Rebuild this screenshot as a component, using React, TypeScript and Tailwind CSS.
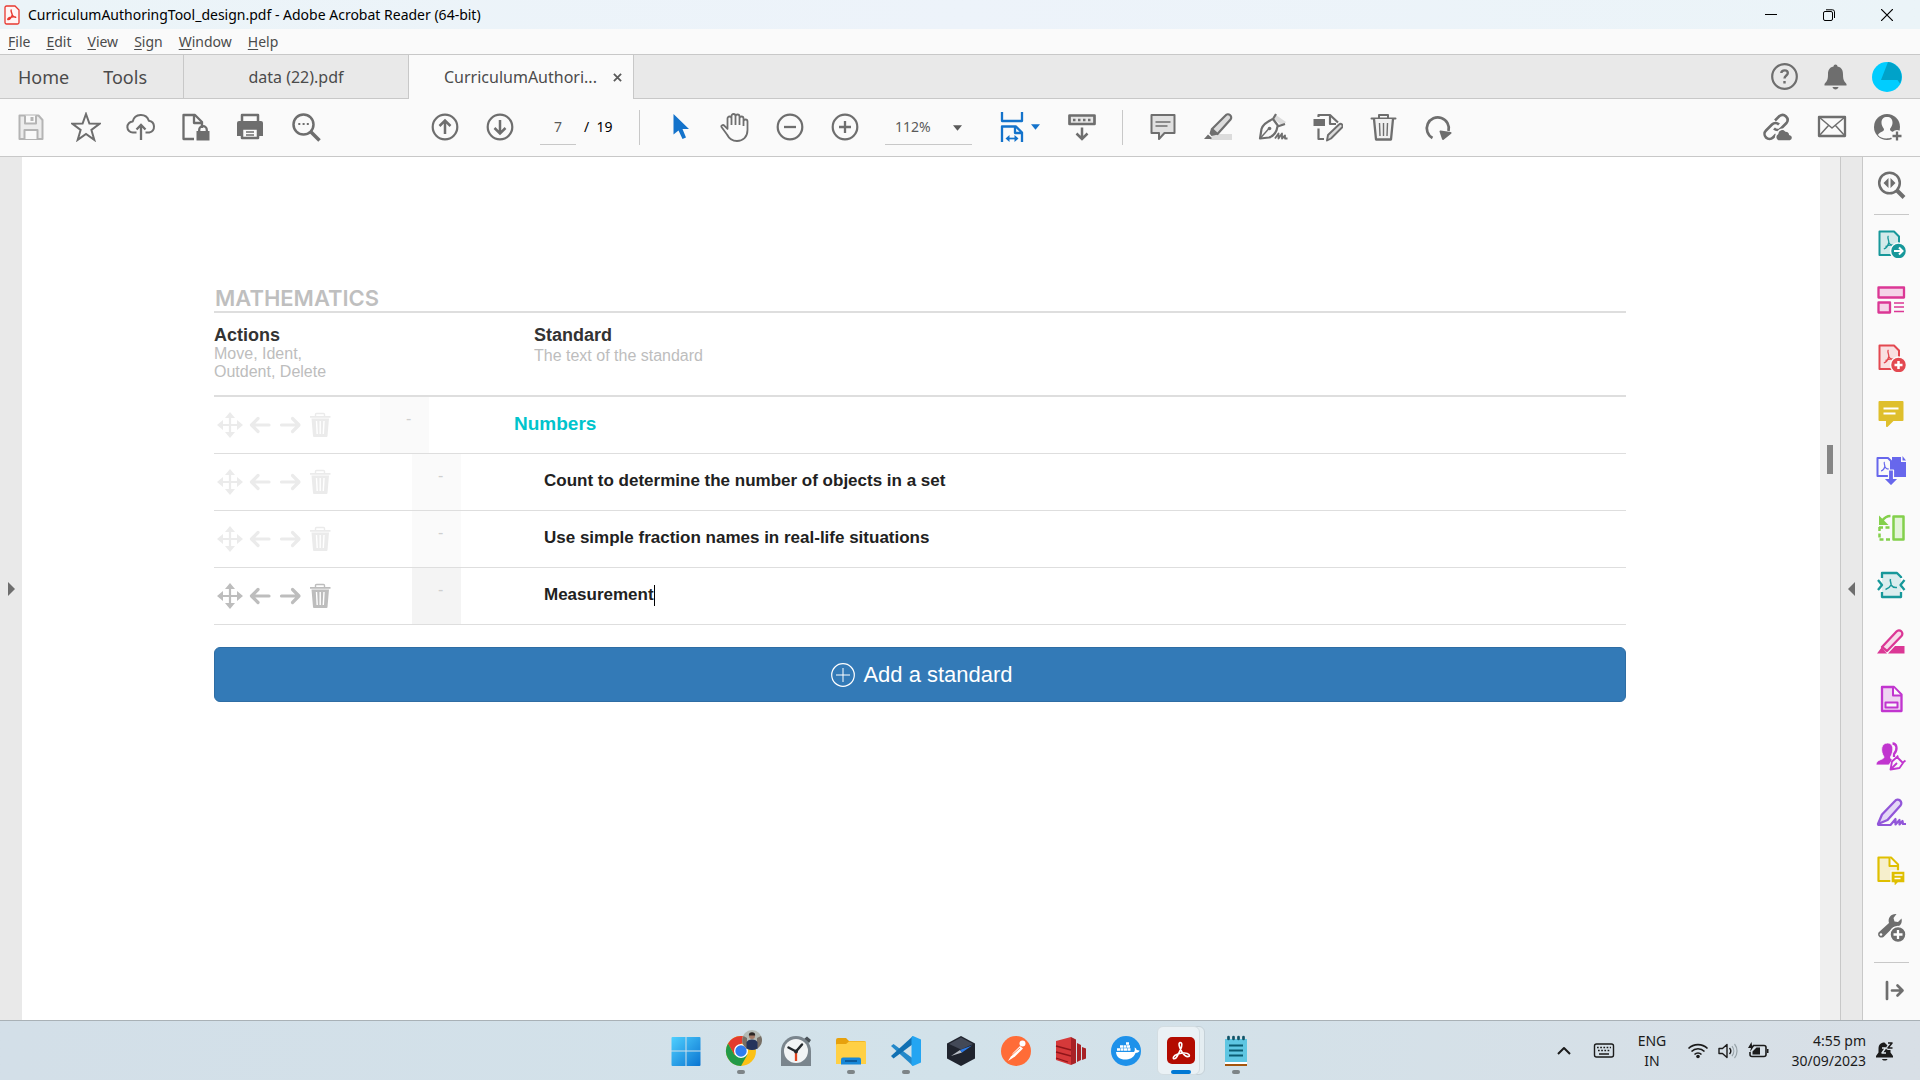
import React from 'react';

type IconProps = { children: React.ReactNode };

// Every glyph is drawn on a 30x30 board
const Icon: React.FC<IconProps> = ({ children }) => (
  <svg
    viewBox="0 0 30 30"
    className="h-[30px] w-[30px] shrink-0"
    fill="none"
    stroke="currentColor"
    strokeWidth="2"
    strokeLinejoin="round"
    aria-hidden="true"
  >
    {children}
  </svg>
);

type Tool = { label: string; art: React.ReactNode; className?: string };

const fileTools: Tool[] = [
  {
    label: 'Save',
    className: 'text-[#b4b4b4]',
    art: (
      <>
        <path d="M3.500 3.500h19l4 4.500v19h-23z" fill="#ececec" />
        <path d="M9 3.500v8h11v-8M8.500 27v-9h13v9" fill="#fafafa" />
        <path d="M16 5v4" strokeWidth="3" />
      </>
    ),
  },
  {
    label: 'Star',
    art: <path d="M15 2l3.400 9.600 10.100.2-8.100 6.200 2.900 9.900L15 22l-8.300 5.900 2.900-9.900-8.100-6.200 10.100-.2z" strokeLinejoin="miter" />,
  },
  {
    label: 'Upload',
    art: (
      <>
        <path d="M10.500 20.500H7a5.500 5.500 0 0 1-.3-11 8.400 8.400 0 0 1 16.100-.8 6 6 0 0 1 .5 11.800h-3.800" />
        <path d="M15 28V13M10.500 17.500L15 13l4.500 4.500" strokeLinejoin="miter" strokeWidth="2.300" />
      </>
    ),
  },
  {
    label: 'Protect',
    art: (
      <>
        <path d="M13 27H2.500V3H14l7 7v6" strokeWidth="2.300" />
        <path d="M13 3v8h8" strokeWidth="2.300" />
        <path d="M15.500 19h13v9.500h-13z" fill="currentColor" stroke="none" />
        <path d="M18.200 19v-1a3.800 3.800 0 0 1 7.600 0v1" strokeWidth="2.300" />
      </>
    ),
  },
  {
    label: 'Print',
    art: (
      <>
        <path d="M6 9V3h16v6" strokeWidth="2.500" />
        <path d="M1 11a2 2 0 0 1 2-2h22a2 2 0 0 1 2 2v13H1z" fill="currentColor" stroke="none" />
        <path d="M6 16.500h16V26H6z" fill="#fafafa" strokeWidth="2.500" />
        <path d="M10 20h8M10 23h8" strokeWidth="1.300" />
      </>
    ),
  },
  {
    label: 'Find',
    art: (
      <>
        <circle cx="12.500" cy="12.500" r="10" strokeWidth="2.500" />
        <path d="M20 20l8.500 8.500" strokeWidth="3.500" />
        <path d="M7.300 12h2M11.600 12h2M15.800 12h2" />
      </>
    ),
  },
];

const pageTools: Tool[] = [
  {
    label: 'Previous page',
    art: (
      <>
        <circle cx="15" cy="15" r="12.300" strokeWidth="2.200" />
        <path d="M15 22V8.500M9.500 14L15 8.500l5.500 5.500" strokeWidth="2.500" strokeLinejoin="miter" />
      </>
    ),
  },
  {
    label: 'Next page',
    art: (
      <>
        <circle cx="15" cy="15" r="12.300" strokeWidth="2.200" />
        <path d="M15 8v13.500M9.500 16l5.500 5.500 5.500-5.500" strokeWidth="2.500" strokeLinejoin="miter" />
      </>
    ),
  },
];

const viewTools: Tool[] = [
  {
    label: 'Select',
    className: 'text-[#1473cb]',
    art: <path d="M8.500 2v20.500l5-4 4 8.500 3.500-1.500-3.500-8.500H24z" fill="currentColor" stroke="none" />,
  },
  {
    label: 'Pan',
    art: (
      <path
        d="M7.500 17V6.500a2 2 0 0 1 4 0V13M11.500 6V4a2 2 0 0 1 4 0v9M15.500 4.500a2 2 0 0 1 4 0V13M19.500 6.500a2 2 0 0 1 4 0V14M23.500 9.500a2 2 0 0 1 4 0V18c0 7-4.500 11-10.500 11-5 0-8-2.500-10-6.500L1.500 15c-.7-1.600 1.500-2.800 3-1.200L8 17.500"
        strokeWidth="1.800"
      />
    ),
  },
  {
    label: 'Zoom out',
    art: (
      <>
        <circle cx="15" cy="15" r="12.300" strokeWidth="2.200" />
        <path d="M9 15h12" strokeWidth="2.300" />
      </>
    ),
  },
  {
    label: 'Zoom in',
    art: (
      <>
        <circle cx="15" cy="15" r="12.300" strokeWidth="2.200" />
        <path d="M9 15h12M15 9v12" strokeWidth="2.300" />
      </>
    ),
  },
];

const markupTools: Tool[] = [
  {
    label: 'Comment',
    art: (
      <>
        <path d="M3.500 3h23v18h-10L11 27v-6H3.500z" fill="#e0e0e0" />
        <path d="M7.500 10h15M7.500 14h12" strokeWidth="1.300" />
      </>
    ),
  },
  {
    label: 'Highlight',
    art: (
      <>
        <path d="M10 22h19v6H7z" fill="#dcdcdc" stroke="none" />
        <path d="M9 17L22.500 3.500a2.500 2.500 0 0 1 5 4L14.500 22z" fill="#dcdcdc" strokeWidth="2.200" />
        <path d="M8 16.500l7 6-6.500 1.500-2-2.500zM1 27l4-4.500 3.500 3V27z" fill="currentColor" stroke="none" />
      </>
    ),
  },
  {
    label: 'Sign',
    art: (
      <>
        <path d="M18 3l10 7-3 4-9-7z" fill="#dcdcdc" stroke="none" />
        <path d="M18 2l-3 5c-6 2.500-10 5-11.500 10L2 26.500l9-1c5-1.500 7.500-5 8.500-11L27 12M15 7l5.500 7.500" strokeWidth="2.200" />
        <path d="M2.500 26l8-9" strokeWidth="1.400" />
        <circle cx="11.500" cy="16.500" r="1.800" fill="currentColor" stroke="none" />
        <path d="M17 26.500l3.500-5v5l3.500-5v5l3-3v3h2.500" strokeWidth="1.800" />
      </>
    ),
  },
  {
    label: 'Edit',
    art: (
      <>
        <path d="M5.500 5V3H17l8 7.500" strokeWidth="2.200" />
        <path d="M17 3v9h6M5.500 16.500V27H11" strokeWidth="2.200" />
        <path d="M.5 7h11.500v7H.5z" fill="currentColor" stroke="none" />
        <path d="M15 23l11-10.500a2 2 0 0 1 3 3L18 26.500l-4 2z" fill="#dcdcdc" strokeWidth="1.900" />
      </>
    ),
  },
  {
    label: 'Delete',
    art: (
      <>
        <path d="M3.500 6.500h24M11 6V3h9v3" strokeLinecap="round" />
        <path d="M6 7l2 20.500h15l2-20.500" fill="#f1f1f1" strokeWidth="2.300" />
        <path d="M11.500 11l.5 13M15.500 11v13M19.500 11l-.5 13" strokeWidth="1.400" />
      </>
    ),
  },
  {
    label: 'Rotate',
    art: (
      <>
        <path d="M9.500 26A11 11 0 1 1 25.500 19" strokeWidth="2.700" />
        <path d="M17.500 19.500l10 1.500-7.500 6z" fill="currentColor" />
      </>
    ),
  },
];

const shareTools: Tool[] = [
  {
    label: 'Share link',
    art: (
      <>
        <path d="M13 8.500L17.500 4a5 5 0 0 1 7 7L19 16.500a5 5 0 0 1-7 0" strokeWidth="2.600" />
        <path d="M17 12.500a5 5 0 0 0-7 0l-6 6a4.900 4.900 0 0 0 7 7l3-3" strokeWidth="2.600" />
        <path d="M16 29a4.300 4.300 0 0 1-.3-7.500 4.500 4.500 0 0 1 8-2.500 4 4 0 0 1 4 3.500 3.300 3.300 0 0 1 .3 6.500z" fill="currentColor" stroke="#fafafa" strokeWidth="1.500" />
      </>
    ),
  },
  {
    label: 'Email',
    art: (
      <>
        <path d="M2 5h26v19H2z" strokeWidth="2.300" />
        <path d="M2 5l13 11L28 5M2 24l9.500-10.500M28 24l-9.500-10.500" strokeWidth="1.500" />
      </>
    ),
  },
  {
    label: 'Add people',
    art: (
      <>
        <circle cx="15" cy="15" r="13" fill="currentColor" stroke="none" />
        <path
          d="M6 23c1-3 6-3 6-5.500 0-1.500-2.500-3-2.500-7 0-3.500 2-5.500 5.500-5.500s5.500 2 5.500 5.500c0 4-2.500 5.500-2.500 7 0 2.500 6 2.500 6 5.500-3 4-15 5-18 0z"
          fill="#fafafa"
          stroke="none"
        />
        <circle cx="25" cy="24" r="6" fill="#fafafa" stroke="none" />
        <path d="M20.500 24h9M25 19.500v9" strokeWidth="2.300" />
      </>
    ),
  },
];

const Trefoil = () => (
  <path d="M12.500 8c-1.800 1 .5 4 .3 6.500-.6 2.500-2.300 5.500-5 6.500M12.800 14.500c1.500 2.500 3.500 4 6.700 3.500M9.500 18.500c2.500-1.500 5.500-2 8.500-1.500" strokeWidth="1.300" />
);

const sideTools: Tool[] = [
  {
    label: 'Export PDF',
    className: 'text-[#17989a]',
    art: (
      <>
        <path d="M3.500 3.500H18l5 5V27H3.500z" fill="#d3eaea" />
        <Trefoil />
        <circle cx="22.500" cy="23" r="8" fill="currentColor" stroke="#fafafa" strokeWidth="1.500" />
        <path d="M18 23h8M23 19.500l3.500 3.500-3.500 3.500" stroke="#fff" strokeLinejoin="miter" />
      </>
    ),
  },
  {
    label: 'Organize pages',
    className: 'text-[#db3795]',
    art: (
      <>
        <path d="M2.500 2.500H28v10H2.500zM2.500 17.500H14v10H2.500z" fill="#f5d3e8" strokeWidth="2.300" />
        <path d="M18 18h10M18 22h10M18 26.500h10" strokeWidth="1.300" />
      </>
    ),
  },
  {
    label: 'Create PDF',
    className: 'text-[#e34850]',
    art: (
      <>
        <path d="M3.500 3.500H18l5 5V27H3.500z" fill="#f9dfe1" />
        <Trefoil />
        <circle cx="22.500" cy="23" r="8" fill="currentColor" stroke="#fafafa" strokeWidth="1.500" />
        <path d="M18.500 23h8M22.500 19v8" stroke="#fff" strokeWidth="2.500" />
      </>
    ),
  },
  {
    label: 'Comment',
    className: 'text-[#dfbf2c]',
    art: (
      <>
        <path d="M3.500 3h23v18h-9.500L11 27v-6H3.500z" fill="currentColor" />
        <path d="M7.500 9.500h15M7.500 14.500h12" stroke="#fff" />
      </>
    ),
  },
  {
    label: 'Combine files',
    className: 'text-[#6767ec]',
    art: (
      <>
        <path d="M16 1h9v5h5v15H16z" fill="currentColor" stroke="none" />
        <path d="M26.500 0L30 4.500h-3.500z" fill="currentColor" stroke="none" />
        <path d="M1.500 2H12l3 3v15H1.500z" fill="#fafafa" />
        <path d="M8.500 6c-1 1 .5 3 .3 4.500-.5 2-1.500 4-3.800 4.500M8.800 10.500c1 2 2 3 4.200 2.500" strokeWidth="1.200" />
        <path d="M12.500 14h5v8.500h5L15 30l-7.500-7.500h5z" fill="currentColor" stroke="#fafafa" strokeWidth="1.200" />
      </>
    ),
  },
  {
    label: 'Compare files',
    className: 'text-[#83d04b]',
    art: (
      <>
        <path d="M17.500 3.500h10v23h-10z" fill="#e3f4d8" strokeWidth="2.500" />
        <path d="M3 14.500h11M3.500 26.500h11M3.500 14v12.500" strokeDasharray="4 2.500" strokeWidth="2.500" />
        <path d="M14.500 3c-4 0-6.500 2-8.500 5" strokeWidth="2.700" />
        <path d="M3 2.500v9.500h9.500z" fill="currentColor" stroke="none" />
      </>
    ),
  },
  {
    label: 'Compress PDF',
    className: 'text-[#17989a]',
    art: (
      <>
        <path d="M6 8V3h15l4 5v19H6z" fill="#dbedee" stroke="none" />
        <path d="M6 8V3h15l4 4v1M6 22v5h19v-5M2 10l4 5-4 5M28.500 10l-4 5 4 5" strokeWidth="2.300" />
        <path d="M14.500 9c-1 2 1 4 .5 6-1 2-2.500 3.500-5.500 4.500M15 15c1.500 2 3 3 6 2.500" strokeWidth="1.500" />
      </>
    ),
  },
  {
    label: 'Redact',
    className: 'text-[#db3795]',
    art: (
      <>
        <path d="M12 26.500L19 19h9.500v7.500zM1 26.500l4.500-6 5.500 6z" fill="currentColor" stroke="none" />
        <path d="M6 20L20.500 4.500a2.500 2.500 0 0 1 5 4.500L11 24z" fill="#f7dcea" strokeWidth="2.300" />
      </>
    ),
  },
  {
    label: 'Prepare form',
    className: 'text-[#c135cf]',
    art: (
      <>
        <path d="M6 3h12l7.500 7.500V27H6z" fill="#efd3f2" strokeWidth="2.300" />
        <path d="M17 3v8.500h8" fill="#fafafa" />
        <path d="M9.500 18.500h12v5h-12z" fill="#fafafa" />
      </>
    ),
  },
  {
    label: 'Request signatures',
    className: 'text-[#c135cf]',
    art: (
      <>
        <path d="M16.500 2.500c4.500 0 5.500 6 1.500 10.500v3" strokeWidth="2.300" />
        <path d="M0 24c0-6 8-5 8-8C4 10 5 2 11.500 2S18 10 14.500 16c0 2 1 2 2 2.500L13 24z" fill="currentColor" stroke="#fafafa" strokeWidth=".8" />
        <path d="M14.500 28.500l1.500-8 5-4.500 6 6-3.500 5zM22 14.500l-1 2M29.500 19.500L27 21.500M15 28l6-6" fill="#fafafa" strokeWidth="1.800" />
      </>
    ),
  },
  {
    label: 'Fill and sign',
    className: 'text-[#9256d9]',
    art: (
      <>
        <path d="M2 26l4-9.500L19 3a3 3 0 0 1 5.500 4.500L11.500 22 2 26z" fill="#e4d8f6" strokeWidth="2.300" />
        <path d="M1.500 27h13l5-6v5.500l4-4.500v4.500l3-3.500.5 3h3" strokeWidth="2.200" />
      </>
    ),
  },
  {
    label: 'Send for comments',
    className: 'text-[#dfbf00]',
    art: (
      <>
        <path d="M2.500 2.500H15l7 7V26H2.500z" fill="#f6efcc" strokeWidth="2.200" />
        <path d="M13.500 2.500V11H22" fill="#fafafa" />
        <path d="M15 16h14v12h-7l-4 4v-4h-3z" fill="currentColor" stroke="#fafafa" strokeWidth="1.300" />
        <path d="M18.500 20h8M18.500 23.500h6" stroke="#fff" strokeWidth="1.500" />
      </>
    ),
  },
  {
    label: 'More tools',
    art: (
      <>
        <path
          d="M2.500 20.500L13 11c-1.500-5 2-9.500 7.500-9l-3 4 1 3.500 3.500.5 3.500-3.500c1.500 5.500-3 9.500-8 8.500L7.500 25c-3.500 2-6.500-1.500-5-4.500z"
          fill="currentColor"
          stroke="none"
        />
        <circle cx="5" cy="22.500" r="1.300" fill="#fafafa" stroke="none" />
        <circle cx="22" cy="22.500" r="8" fill="currentColor" stroke="#fafafa" strokeWidth="1.500" />
        <path d="M17.500 22.500h9M22 18v9" stroke="#fff" strokeWidth="2.300" />
      </>
    ),
  },
];

const ToolButton: React.FC<{ tool: Tool }> = ({ tool }) => (
  <button type="button" aria-label={tool.label} className={`block shrink-0 ${tool.className ?? 'text-[#6e6e6e]'}`}>
    <Icon>{tool.art}</Icon>
  </button>
);

const Caret = () => (
  <svg viewBox="0 0 10 6" className="h-[6px] w-[9px]" fill="currentColor" aria-hidden="true">
    <path d="M0 0h10L5 6z" />
  </svg>
);

const TitleBar = () => (
  <header className="flex h-[29px] items-center bg-gradient-to-r from-[#ebf4f8] via-[#edf3fa] to-[#ebf4f8] text-black">
    <svg viewBox="0 0 16 20" className="ml-1 h-5 w-4" fill="#fff5f5" stroke="#e8382f" aria-hidden="true">
      <path d="M1 2.500A1.500 1.500 0 0 1 2.500 1H11l4 4v12.500a1.500 1.500 0 0 1-1.500 1.500h-11A1.500 1.500 0 0 1 1 17.500z" strokeWidth="1.300" />
      <path d="M7.500 4.500c-1.500 1 .8 4 .8 5.500-.8 2-2.600 5-4.500 4.500-.8-1.500 4-3 7.500-2.500 1.500 1-2-.3-3-2" fill="none" strokeWidth="1.400" />
    </svg>
    <h1 className="ml-2 text-sm">CurriculumAuthoringTool_design.pdf - Adobe Acrobat Reader (64-bit)</h1>
    <div className="ml-auto flex pr-1">
      <button type="button" aria-label="Minimize" className="flex h-[29px] w-[58px] items-center justify-center">
        <svg viewBox="0 0 12 12" className="h-3 w-3" stroke="#000"><path d="M0 5.500h12" /></svg>
      </button>
      <button type="button" aria-label="Restore" className="flex h-[29px] w-[58px] items-center justify-center">
        <svg viewBox="0 0 12 12" className="h-3 w-3" stroke="#000" fill="none">
          <rect x=".5" y="2.500" width="9" height="9" rx="1.500" />
          <path d="M3 .8h6.500a2 2 0 0 1 2 2V9" />
        </svg>
      </button>
      <button type="button" aria-label="Close" className="flex h-[29px] w-[58px] items-center justify-center">
        <svg viewBox="0 0 12 12" className="h-3 w-3" stroke="#000" strokeWidth="1.200"><path d="M0 0l12 12M12 0L0 12" /></svg>
      </button>
    </div>
  </header>
);

const menuItems = ['File', 'Edit', 'View', 'Sign', 'Window', 'Help'];

const MenuBar = () => (
  <nav className="flex h-[25px] items-center gap-4 bg-[#fafafa] pl-2 text-sm text-[#4b4b4b]">
    {menuItems.map((item) => (
      <button key={item} type="button">
        <span className="underline underline-offset-2">{item[0]}</span>
        {item.slice(1)}
      </button>
    ))}
  </nav>
);

const TabBar = () => (
  <div className="flex h-[45px] border-t border-[#c8c8c8] bg-[#e9e9e9] text-[#4b4b4b]">
    <div className="flex w-[183px] items-center gap-[34px] border-b border-[#c8c8c8] pl-[18px] text-lg">
      <button type="button">Home</button>
      <button type="button">Tools</button>
    </div>
    <button type="button" className="w-[226px] border-x border-b border-[#c8c8c8] text-base">
      data (22).pdf
    </button>
    <div className="flex w-[225px] items-center border-r border-[#c8c8c8] bg-[#fafafa] pl-[35px] text-base">
      <button type="button" className="w-[154px] whitespace-nowrap text-left">CurriculumAuthori...</button>
      <button type="button" aria-label="Close tab" className="ml-[15px]">
        <svg viewBox="0 0 10 10" className="h-[9px] w-[9px]" stroke="#5a5a5a" strokeWidth="2"><path d="M1 1l8 8M9 1L1 9" /></svg>
      </button>
    </div>
    <div className="flex flex-1 items-center justify-end gap-[21px] border-b border-[#c8c8c8] pr-[18px] text-[#6e6e6e]">
      <button type="button" aria-label="Help">
        <Icon>
          <circle cx="14.500" cy="14.500" r="12.300" strokeWidth="2.200" />
          <path d="M11.300 11c.3-3.500 6.500-3.500 6.500 0 0 2.500-3.300 2.500-3.300 5.500M14.500 19v2.500" strokeWidth="2.400" />
        </Icon>
      </button>
      <button type="button" aria-label="Notifications">
        <Icon>
          <path
            d="M14.500 2.500a2 2 0 0 1 2 2c4.500 1 5.500 4 5.500 8 0 6 1.500 7 3.500 9.500v1.500h-22V22c2-2.500 3.500-3.500 3.500-9.500 0-4 1-7 5.500-8a2 2 0 0 1 2-2zM11.500 25h6c-.5 3.300-5.500 3.300-6 0z"
            fill="currentColor"
            stroke="none"
          />
        </Icon>
      </button>
      <button type="button" aria-label="Account">
        <Icon>
          <circle cx="15" cy="15" r="15" fill="#00cdff" stroke="none" />
          <path d="M16 0a15 15 0 0 1 12 21.500l-2.500-3.500H9z" fill="#00a2c9" stroke="none" />
        </Icon>
      </button>
    </div>
  </div>
);

const Toolbar = () => (
  <div className="flex h-[58px] items-center border-b border-[#c8c8c8] bg-[#fafafa] pb-px pl-4 pr-[18px]">
    <div className="flex gap-[25px]">
      {fileTools.map((tool) => <ToolButton key={tool.label} tool={tool} />)}
    </div>
    <div className="ml-[109px] flex items-center gap-[25px]">
      {pageTools.map((tool) => <ToolButton key={tool.label} tool={tool} />)}
      <div className="flex w-[74px] items-center text-sm text-black">
        <input
          aria-label="Page number"
          defaultValue="7"
          className="h-[35px] w-9 border-b border-[#c8c8c8] bg-transparent text-center text-[#5a5a5a] outline-none"
        />
        <span className="ml-2 whitespace-pre">/  19</span>
      </div>
      <div className="h-[35px] w-px bg-[#c8c8c8]" />
      {viewTools.map((tool) => <ToolButton key={tool.label} tool={tool} />)}
      <div className="relative w-[87px] text-[#5a5a5a]">
        <select
          aria-label="Zoom level"
          defaultValue="112%"
          className="h-[35px] w-full appearance-none border-b border-[#c8c8c8] bg-transparent pl-[10px] text-sm outline-none"
        >
          <option>112%</option>
        </select>
        <span className="pointer-events-none absolute right-[10px] top-[15px]"><Caret /></span>
      </div>
      <button type="button" aria-label="Fit width" className="flex w-[45px] items-center gap-1 text-[#1473cb]">
        <Icon>
          <path d="M5 0v9h20V0" strokeWidth="2.300" />
          <path d="M5 30V14.500h14l6 6V30M18 14.500v6.500h7" strokeWidth="2.300" />
          <path d="M10 26.500h10" strokeWidth="1.700" />
          <path d="M12.500 23v7L8.500 26.500zM17.500 23v7l4-3.500z" fill="currentColor" stroke="none" />
        </Icon>
        <Caret />
      </button>
      <button type="button" aria-label="Reading mode" className="text-[#6e6e6e]">
        <Icon>
          <path d="M2.500 3.500h25v8.500h-25z" fill="#e6e6e6" strokeWidth="2.700" />
          <path d="M6 8h2.500M11 8h2.500M16 8h2.500M21 8h2.500" strokeWidth="2.500" />
          <path d="M15 15.500V27M9.500 21.500L15 27l5.500-5.500" strokeWidth="2.500" strokeLinejoin="miter" />
        </Icon>
      </button>
      <div className="h-[35px] w-px bg-[#c8c8c8]" />
      {markupTools.map((tool) => <ToolButton key={tool.label} tool={tool} />)}
    </div>
    <div className="ml-auto flex gap-[25px]">
      {shareTools.map((tool) => <ToolButton key={tool.label} tool={tool} />)}
    </div>
  </div>
);

type Standard = { text: string; top?: boolean; editing?: boolean };

const standards: Standard[] = [
  { text: 'Numbers', top: true },
  { text: 'Count to determine the number of objects in a set' },
  { text: 'Use simple fraction names in real-life situations' },
  { text: 'Measurement', editing: true },
];

const RowActions: React.FC<{ editing?: boolean }> = ({ editing }) => (
  <div className={`flex items-center pl-px ${editing ? 'text-[#bdbdbd]' : 'text-[#ebebeb]'}`}>
    <button type="button" aria-label="Move">
      <Icon>
        <path d="M15 5v20M5 15h20" strokeWidth="2.200" />
        <path d="M15 2l5 6H10zM15 28l5-6H10zM2 15l6-5v10zM28 15l-6-5v10z" fill="currentColor" stroke="none" />
      </Icon>
    </button>
    <button type="button" aria-label="Outdent">
      <Icon><path d="M24 15H7M13 8.500L6.500 15l6.500 6.500" strokeWidth="3.200" strokeLinecap="round" /></Icon>
    </button>
    <button type="button" aria-label="Indent">
      <Icon><path d="M6.500 15h17M17.500 8.500L24 15l-6.500 6.500" strokeWidth="3.200" strokeLinecap="round" /></Icon>
    </button>
    <button type="button" aria-label="Delete">
      <Icon>
        <path d="M10.500 6.500V4.500q0-1 1-1h7q1 0 1 1v2" strokeWidth="1.400" />
        <path d="M5 6h20.500v1.700H5zM6.500 8.500h17.500L22.500 26q0 1-1 1H9q-1 0-1-1z" fill="currentColor" stroke="none" />
        <path d="M11.500 11l.7 13M15.200 11v13M19 11l-.7 13" stroke="#fff" strokeWidth="1.400" />
      </Icon>
    </button>
  </div>
);

const StandardsPage = () => (
  <main className="min-w-0 flex-1 bg-white pb-20 pl-[192px] pr-[194px] pt-[128px] font-['Liberation_Sans',Arial,sans-serif]">
    <h2 className="border-b-2 border-[#dedede] pl-px font-['Inter',sans-serif] text-[22px] font-semibold leading-[26px] text-[#bfbfbf]">
      MATHEMATICS
    </h2>
    <table className="w-full table-fixed border-collapse text-left">
      <colgroup>
        <col className="w-[166px]" />
        <col className="w-[134px]" />
        <col />
      </colgroup>
      <thead>
        <tr className="h-[83px] border-b-2 border-[#dedede] align-top">
          <th className="pt-3 font-normal">
            <div className="text-[18px] font-bold leading-[20px] text-[#333]">Actions</div>
            <div className="w-[120px] text-[16px] leading-[18px] text-[#bdbdbd]">Move, Ident, Outdent, Delete</div>
          </th>
          <th aria-label="Level" />
          <th className="pl-5 pt-3 font-normal">
            <div className="text-[18px] font-bold leading-[20px] text-[#333]">Standard</div>
            <div className="mt-[2px] text-[16px] leading-[18px] text-[#bdbdbd]">The text of the standard</div>
          </th>
        </tr>
      </thead>
      <tbody>
        {standards.map((row) => (
          <tr key={row.text} className="h-[57px] border-b border-[#dedede]">
            <td className="p-0"><RowActions editing={row.editing} /></td>
            <td className="p-0">
              <div
                className={`flex h-14 w-[49px] items-center pb-3 text-[16px] text-[#cfcfcf] ${row.top ? '' : 'ml-8'} ${
                  row.editing ? 'bg-[#f4f4f4]' : 'bg-[#fafafa]'
                }`}
              >
                <span className="ml-[26px]">-</span>
              </div>
            </td>
            <td className={`p-0 pb-[2px] font-bold ${row.top ? 'text-[19px] text-[#00c4cc]' : 'pl-[30px] text-[17px] text-[#212121]'}`}>
              <span className="flex items-center">
                {row.text}
                {row.editing && <span className="h-[21px] w-px bg-black" />}
              </span>
            </td>
          </tr>
        ))}
      </tbody>
    </table>
    <button
      type="button"
      className="mt-[22px] flex h-[55px] w-full items-center justify-center gap-2 rounded-md border border-[#2e6da4] bg-[#337ab7] pl-1 text-[22px] text-white"
    >
      <svg viewBox="0 0 24 24" className="h-6 w-6" fill="none" stroke="currentColor" aria-hidden="true">
        <circle cx="12" cy="12" r="11.300" strokeWidth="1.200" />
        <path d="M5 12h14M12 5v14" />
      </svg>
      Add a standard
    </button>
  </main>
);

const SidePanel = () => (
  <aside className="flex w-[58px] flex-col items-center border-l border-[#c8c8c8] bg-[#fafafa] pr-px pt-[13px] text-[#6e6e6e]">
    <button type="button" aria-label="Search tools">
      <Icon>
        <circle cx="13.500" cy="13" r="10.300" strokeWidth="2.500" />
        <path d="M21 20.500l7 7" strokeWidth="4" />
        <path d="M12.500 8v10l-5-5zM14.500 8v10l5-5z" fill="currentColor" stroke="none" />
      </Icon>
    </button>
    <div className="mb-[13px] mt-[14px] h-px w-[35px] bg-[#c8c8c8]" />
    <div className="flex flex-col gap-[27px]">
      {sideTools.map((tool) => <ToolButton key={tool.label} tool={tool} />)}
    </div>
    <div className="mb-[13px] mt-[20px] h-px w-[35px] bg-[#c8c8c8]" />
    <button type="button" aria-label="Collapse panel">
      <Icon>
        <path d="M11 6v17M16 14.500h9M21.500 9.500l5 5-5 5" strokeWidth="2.700" strokeLinecap="round" />
      </Icon>
    </button>
  </aside>
);

type TaskApp = { name: string; art: React.ReactNode; running?: boolean; active?: boolean };

const taskApps: TaskApp[] = [
  {
    name: 'Start',
    art: (
      <g stroke="none">
        <linearGradient id="win" x1="0" y1="0" x2="1" y2="1">
          <stop stopColor="#4fd0ff" />
          <stop offset="1" stopColor="#0a74d1" />
        </linearGradient>
        <path d="M.5 2q0-1 1-1h13v13.500H.5zM15.500 1h13q1 0 1 1v12.500h-14zM.5 15.500h14V30h-13q-1 0-1-1zM15.500 15.500h14V29q0 1-1 1h-13z" fill="url(#win)" />
      </g>
    ),
  },
  {
    name: 'Google Chrome',
    running: true,
    art: (
      <g stroke="none">
        <circle cx="15" cy="15" r="15" fill="#fbc116" />
        <path d="M2 7.500A15 15 0 0 1 28 7.500H15L8.500 19z" fill="#e33b2e" />
        <path d="M2 7.500A15 15 0 0 0 15 30l6.500-11.500L8.500 19z" fill="#229a48" />
        <circle cx="15" cy="15" r="7" fill="#fff" />
        <circle cx="15" cy="15" r="5.700" fill="#2f7df0" />
        <circle cx="26" cy="4" r="10" fill="#b4bbb5" />
        <path d="M17.500 0a10 10 0 0 0 .5 10l3 3V2zM35 0a10 10 0 0 1-1 10l-3 3V2z" fill="#776f66" />
        <path d="M20.500 12.500V6.500q1-3 5.500-3t5.500 3v6q-5.500 3-11 0z" fill="#24345c" />
        <circle cx="26" cy="0" r="3" fill="#a47a66" />
        <path d="M22.800-.5a3.200 3.200 0 0 1 6.400 0z" fill="#2b2523" />
      </g>
    ),
  },
  {
    name: 'Clock',
    art: (
      <g stroke="none">
        <path d="M23 3l3-2.500L30 4l-2 3z" fill="#4a5258" />
        <path d="M0 30V15a15 15 0 0 1 30 0v15z" fill="#7a858d" />
        <circle cx="15" cy="15" r="12" fill="#f2f4f5" />
        <path d="M15 15v10" stroke="#e0431d" strokeWidth="2.300" />
        <path d="M7.500 11.500L15 15.500l6-7" stroke="#23282c" strokeWidth="2.500" strokeLinecap="round" />
        <circle cx="15" cy="15.500" r="2" fill="#23282c" />
      </g>
    ),
  },
  {
    name: 'File Explorer',
    running: true,
    art: (
      <g stroke="none">
        <path d="M0 4q0-2 2-2h8l3 3h15q2 0 2 2v6H0z" fill="#e7a10c" />
        <path d="M0 9q0-1 1-1h9l3-2.500h16q1 0 1 1V28H0z" fill="#ffd045" />
        <path d="M5 28.500v-5q0-2 2-2h16q2 0 2 2v5z" fill="#1787d8" />
        <path d="M9 25h12" stroke="#0b5c9e" />
      </g>
    ),
  },
  {
    name: 'Visual Studio Code',
    running: true,
    art: (
      <g stroke="none">
        <path d="M0 10l2.500-2L22 22.500V30z" fill="#2489ca" />
        <path d="M0 20l2.500 2.500L22 8V0z" fill="#1070b3" />
        <path d="M22 0l8 3.500v23L22 30l-1.500-1V1z" fill="#24a5f2" />
      </g>
    ),
  },
  {
    name: 'Database Client',
    art: (
      <g stroke="none">
        <path d="M15 0l14 7.500v15L15 30 1 22.500v-15z" fill="#20242e" />
        <path d="M15 1.500l12 6.500-12 5.500L3 8z" fill="#434957" />
        <path d="M5 20l9-6 2 2.500z" fill="#b9bec6" />
        <path d="M26 9.500L14 14l2 2.500z" fill="#2c7be8" />
      </g>
    ),
  },
  {
    name: 'Postman',
    art: (
      <g stroke="none">
        <circle cx="15" cy="15" r="15" fill="#ff6c37" />
        <circle cx="21.500" cy="7.500" r="3" fill="#fff" />
        <path d="M19 10l3 2.500-8 8-7 4.500 5-8z" fill="#fff" />
        <path d="M10 20l9-8" stroke="#ff6c37" strokeWidth=".8" />
      </g>
    ),
  },
  {
    name: 'Redis Insight',
    art: (
      <g stroke="none">
        <path d="M0 5l15-4v28L0 24z" fill="#d6393a" />
        <path d="M15 1l5 2.500V27l-5 2zM21 7l4 2v15l-4 2zM26 11l4 1.500v10L26 24z" fill="#a82226" />
        <path d="M0 10l15 4M0 16l15 4M0 22l12 4" stroke="#8f1519" strokeWidth="1.300" />
      </g>
    ),
  },
  {
    name: 'Docker',
    art: (
      <g stroke="none">
        <circle cx="15" cy="15" r="15" fill="#1d91ea" />
        <path d="M5 16h18c1-1 1-3 .5-4.500 1.500.5 2 1.500 2.200 2.500 1 0 2 .2 3 .8-1 1.700-2.500 2.200-4.200 2.200-2 5-6 6.500-10.500 6.500-5 0-8.500-2-9-7.500z" fill="#fff" />
        <path d="M6 13.500h14M9 10.500h10M15 7.500h3.500" stroke="#fff" strokeWidth="2.500" strokeDasharray="3 .5" />
      </g>
    ),
  },
  {
    name: 'Adobe Acrobat',
    running: true,
    active: true,
    art: (
      <>
        <rect x="1" y="1" width="28" height="27" rx="5" fill="#b30b00" stroke="none" />
        <path
          d="M14 6.500c-2.500 1 .5 7 2 9.500 2 3 4.500 5 6.500 4.500s.5-3.500-4-3.500c-4 0-10 1.500-11 4s1.800 2.500 3.500-.5c2-3.500 5-9 4.800-12 0-1.300-1-2.300-1.800-2z"
          stroke="#fff"
          strokeWidth="1.600"
        />
      </>
    ),
  },
  {
    name: 'Notepad',
    running: true,
    art: (
      <g stroke="none">
        <path d="M4 3h22v23H4z" fill="#5fc6e2" />
        <path d="M4 26h22v2H4z" fill="#fff" />
        <path d="M4 28h22v2H4z" fill="#a4550d" />
        <path d="M8 9.500h14M8 14.500h14M8 19.500h14" stroke="#0b5c73" strokeWidth="1.800" />
        <path d="M7.500 1v2M12.500 1v2M17.500 1v2M22.500 1v2" stroke="#125468" strokeWidth="2.700" strokeLinecap="round" />
      </g>
    ),
  },
];

const TaskButton: React.FC<{ app: TaskApp }> = ({ app }) => (
  <button
    type="button"
    aria-label={app.name}
    className="relative flex h-[59px] w-[55px] items-center justify-center [&_svg]:overflow-visible"
  >
    {app.active && (
      <>
        <span className="absolute bottom-[5px] right-[3px] top-[5px] w-4 rounded-md border border-[#c5d1d8] bg-[#e4edf1]" />
        <span className="absolute bottom-[5px] left-[4px] right-[8px] top-[5px] rounded-md border border-[#d3dde2] bg-[#eaf1f5]" />
      </>
    )}
    <span className="relative"><Icon>{app.art}</Icon></span>
    {app.running && (
      <span
        className={`absolute bottom-[6px] h-1 rounded-full ${app.active ? 'w-5 bg-[#0078d4]' : 'w-2 bg-[#7d8487]'}`}
      />
    )}
  </button>
);

const Taskbar = () => (
  <footer className="grid h-[60px] grid-cols-[1fr_auto_1fr] border-t border-[#a9b1b6] bg-gradient-to-r from-[#d3dfe8] via-[#d2e2ea] to-[#d8dfe6] text-[#1b1b1b]">
    <div />
    <div className="flex pl-px">
      {taskApps.map((app) => <TaskButton key={app.name} app={app} />)}
    </div>
    <div className="flex items-center justify-end pr-5">
      <button type="button" aria-label="Show hidden icons">
        <Icon><path d="M9 18l6-6 6 6" /></Icon>
      </button>
      <button type="button" aria-label="Touch keyboard" className="ml-[10px]">
        <Icon>
          <rect x="5.500" y="8" width="19" height="13" rx="2" strokeWidth="1.400" />
          <path d="M8 11.500h14M9 14.500h12" strokeDasharray="1.700 1.500" strokeWidth="1.600" />
          <path d="M10 18h10" strokeWidth="1.500" />
        </Icon>
      </button>
      <button type="button" className="ml-4 w-[34px] text-center text-sm leading-5">ENG IN</button>
      <button type="button" aria-label="Network, sound and battery" className="ml-[14px] flex">
        <Icon>
          <path d="M5.500 12.500a13.500 13.500 0 0 1 19 0M8.500 15.500a9 9 0 0 1 13 0M11.500 18.500a5 5 0 0 1 7 0" strokeWidth="1.600" />
          <circle cx="15" cy="20.500" r="1.800" fill="currentColor" stroke="none" />
        </Icon>
        <Icon>
          <path d="M6 12.500h3.500L14 8.500v13l-4.500-4H6z" strokeWidth="1.400" />
          <path d="M16.500 12a4.500 4.500 0 0 1 0 6" strokeWidth="1.400" />
          <path d="M19 10a8 8 0 0 1 0 10M21.500 8a11 11 0 0 1 0 14" stroke="#98a3a9" strokeWidth="1.200" />
        </Icon>
        <Icon>
          <path d="M10 9.500h11q2 0 2 2v7q0 2-2 2H9q-2 0-2-2V16" strokeWidth="1.600" />
          <path d="M9.500 18.500v-3l4-4H17v7zM24 13h1.500v4H24z" fill="currentColor" stroke="none" />
          <path d="M8.500 6l-3.500 6h3l-1 4 4.500-6.500H9z" fill="currentColor" stroke="none" />
        </Icon>
      </button>
      <button type="button" className="ml-[9px] w-[84px] text-right text-sm leading-5">4:55 pm 30/09/2023</button>
      <button type="button" aria-label="Notifications" className="ml-1">
        <Icon>
          <path d="M14.500 6.500c-4 0-6 2.500-6 6v4L6 20v1.500h17V20l-2.500-3.500v-4zM12 23h5.500c-.5 2-5 2-5.500 0z" fill="currentColor" stroke="none" />
          <path d="M12 12h3.500L12 17h4" stroke="#dde5ea" strokeWidth="1.500" />
          <path d="M18 7h4l-4 5h4.500" stroke="#d8dfe6" strokeWidth="4" />
          <path d="M18 7h4l-4 5h4.500" strokeWidth="1.600" />
        </Icon>
      </button>
    </div>
  </footer>
);

const App: React.FC = () => (
  <div className="flex min-h-screen flex-col bg-[#e9e9e9] font-['Noto_Sans','Open_Sans',sans-serif]">
    <TitleBar />
    <MenuBar />
    <TabBar />
    <Toolbar />
    <div className="flex flex-1">
      <button type="button" aria-label="Open navigation pane" className="flex w-[22px] items-center justify-center text-[#6e6e6e]">
        <svg viewBox="0 0 7 14" className="h-[14px] w-[7px]" fill="currentColor"><path d="M0 0l7 7-7 7z" /></svg>
      </button>
      <StandardsPage />
      <div className="flex w-5 justify-center bg-[#efefef] pt-[288px]">
        <div className="h-[29px] w-[6px] bg-[#868686]" />
      </div>
      <button
        type="button"
        aria-label="Hide tools pane"
        className="flex w-[22px] items-center justify-center border-l border-[#c8c8c8] bg-[#e9e9e9] text-[#6e6e6e]"
      >
        <svg viewBox="0 0 7 14" className="h-[14px] w-[7px]" fill="currentColor"><path d="M7 0L0 7l7 7z" /></svg>
      </button>
      <SidePanel />
    </div>
    <Taskbar />
  </div>
);

export default App;
